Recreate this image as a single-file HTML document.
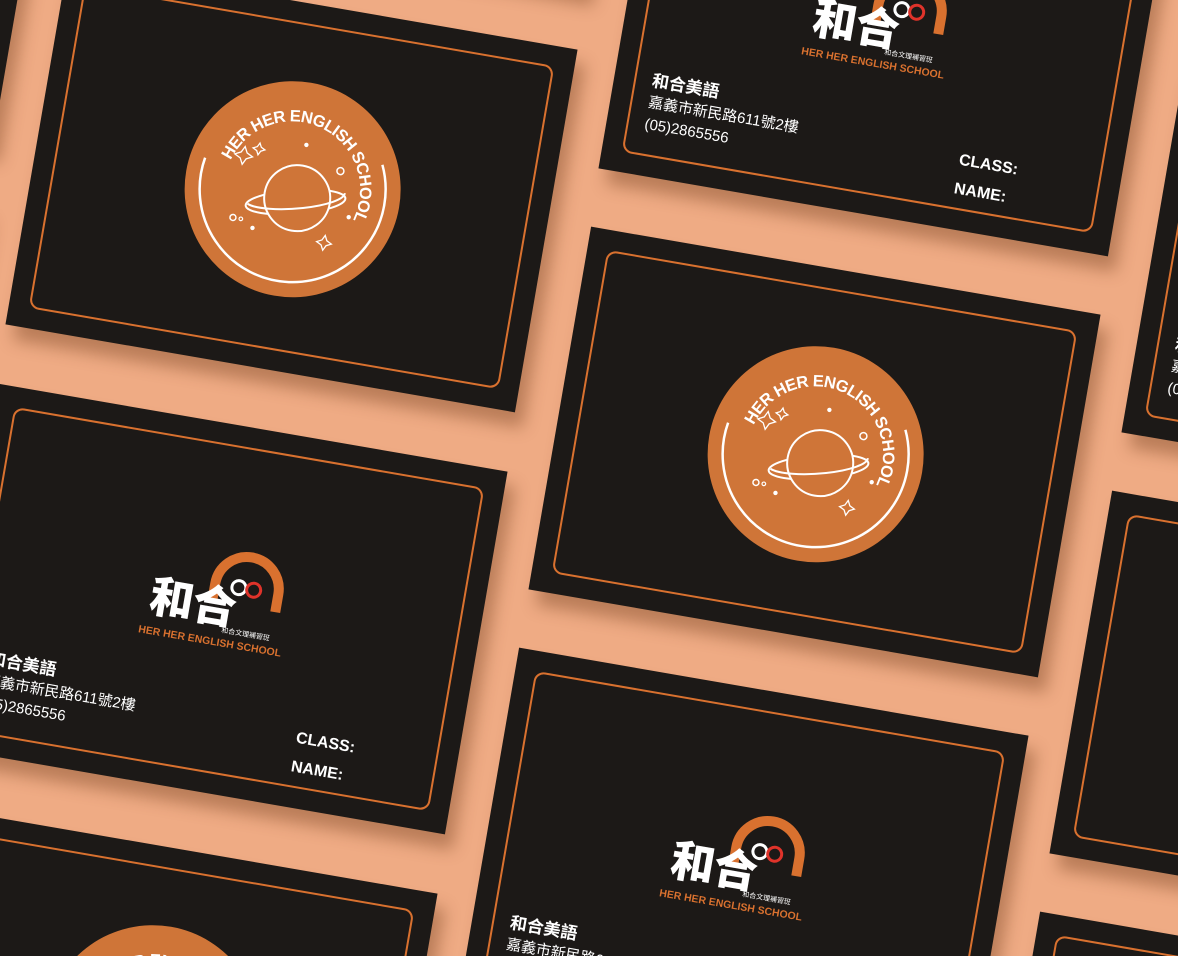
<!DOCTYPE html>
<html><head><meta charset="utf-8"><style>
html,body{margin:0;padding:0;width:1178px;height:956px;overflow:hidden}
body{background:#efab84;position:relative;font-family:"Liberation Sans","Noto Sans CJK TC",sans-serif}
.card{position:absolute;width:517px;height:368px;background:#1c1917;transform:rotate(9.8deg);box-shadow:10px 14px 16px rgba(90,40,10,.35)}
.card .in{position:absolute;left:20px;top:20px;right:20px;bottom:20px;border:2.5px solid #d9712f;border-radius:10px}
.emb{position:absolute;left:150px;top:76px;width:220px;height:220px}
.logo{position:absolute;left:176px;top:128px;width:150px;height:100px;overflow:visible}
.info{position:absolute;left:38px;top:262px;color:#fff;line-height:22px}
.info b{font-size:17px;display:block}
.info span{font-size:15px;display:block}
.cl{position:absolute;left:354px;top:284px;color:#fff;font-family:"Liberation Sans Narrow","Liberation Sans",sans-serif;font-weight:bold;font-size:16px;line-height:29px}
</style></head><body>
<svg width="0" height="0" style="position:absolute"><defs>
<g id="emb">
<circle r="108" fill="#cf7538"/>
<path d="M -91.6,-16.2 A 93 93 0 1 0 84.3,-39.3" fill="none" stroke="#fff" stroke-width="2.5"/>
<path id="tp" d="M -66,-18 A 68 68 0 1 1 34,58.9" fill="none"/>
<text font-family="Liberation Sans,sans-serif" font-weight="bold" font-size="16.5" fill="#fff" letter-spacing="-0.6"><textPath href="#tp">HER HER ENGLISH SCHOOL</textPath></text>
<ellipse cx="5" cy="12" rx="50" ry="12" transform="rotate(-14 5 12)" fill="none" stroke="#fff" stroke-width="2"/>
<circle cx="6" cy="8" r="33" fill="#cf7538" stroke="#fff" stroke-width="2"/>
<path d="M -42,22 A 50 12 -14 0 0 52,-5" fill="none" stroke="#fff" stroke-width="2"/>
<circle cx="6" cy="-46" r="2.2" fill="#fff"/><circle cx="44" cy="-26" r="3.5" fill="none" stroke="#fff" stroke-width="1.5"/>
<circle cx="-54" cy="38" r="3" fill="none" stroke="#fff" stroke-width="1.5"/><circle cx="-46" cy="38" r="1.8" fill="none" stroke="#fff" stroke-width="1.2"/>
<circle cx="-33" cy="45" r="2.2" fill="#fff"/><circle cx="60" cy="18" r="2.2" fill="#fff"/>
<path d="M-54,-34 l3,6 6,3 -6,3 -3,6 -3,-6 -6,-3 6,-3z M-40,-40 l2,4 4,2 -4,2 -2,4 -2,-4 -4,-2 4,-2z M40,40 l2.5,5 5,2.5 -5,2.5 -2.5,5 -2.5,-5 -5,-2.5 5,-2.5z" fill="none" stroke="#fff" stroke-width="1.3"/>
</g>
<g id="logo">
<path d="M 72,50 L 72,32 A 32 32 0 0 1 136,32 L 136,50" fill="none" stroke="#d9712f" stroke-width="10"/>
<circle cx="96" cy="32" r="7" fill="none" stroke="#fff" stroke-width="3"/><circle cx="111" cy="32" r="7" fill="none" stroke="#e0332a" stroke-width="3"/>
<text x="10" y="70" font-family="Noto Sans CJK TC,sans-serif" font-weight="900" font-size="44" fill="#fff" letter-spacing="-1">和合</text>
<text x="86" y="79" font-family="Noto Sans CJK TC,sans-serif" font-size="7" fill="#fff">和合文理補習班</text>
<text x="4" y="93" font-family="Liberation Sans,sans-serif" font-weight="bold" font-size="10.5" fill="#d9712f">HER HER ENGLISH SCHOOL</text>
</g>
</defs></svg>

<div class="card" style="left:32.5px;top:3px"><div class="in"></div><svg class="emb" viewBox="-110 -110 220 220"><use href="#emb"/></svg></div>
<div class="card" style="left:555.5px;top:268px"><div class="in"></div><svg class="emb" viewBox="-110 -110 220 220"><use href="#emb"/></svg></div>
<div class="card" style="left:-107.5px;top:847px"><div class="in"></div><svg class="emb" viewBox="-110 -110 220 220"><use href="#emb"/></svg></div>
<div class="card" style="left:1076.5px;top:532px"><div class="in"></div><svg class="emb" viewBox="-110 -110 220 220"><use href="#emb"/></svg></div>
<div class="card" style="left:-490.5px;top:-262px"><div class="in"></div></div>
<div class="card" style="left:-630.5px;top:582px"><div class="in"></div></div>

<div class="card" style="left:-560.5px;top:160px"><div class="in"></div></div>
<div class="card" style="left:102.5px;top:-419px"><div class="in"></div></div>
<div class="card" style="left:1218.5px;top:-310px"><div class="in"></div></div>
<div class="card" style="left:-37.5px;top:425px"><div class="in"></div><svg class="logo" viewBox="0 0 150 100"><use href="#logo"/></svg>
<div class="info"><b>和合美語</b><span>嘉義市新民路611號2樓</span><span>(05)2865556</span></div><div class="cl">CLASS:<br>NAME:</div></div>
<div class="card" style="left:625.5px;top:-153px"><div class="in"></div><svg class="logo" viewBox="0 0 150 100"><use href="#logo"/></svg>
<div class="info"><b>和合美語</b><span>嘉義市新民路611號2樓</span><span>(05)2865556</span></div><div class="cl">CLASS:<br>NAME:</div></div>
<div class="card" style="left:483.5px;top:689px"><div class="in"></div><svg class="logo" viewBox="0 0 150 100"><use href="#logo"/></svg>
<div class="info"><b>和合美語</b><span>嘉義市新民路611號2樓</span><span>(05)2865556</span></div><div class="cl">CLASS:<br>NAME:</div></div>
<div class="card" style="left:1148.5px;top:111px"><div class="in"></div><svg class="logo" viewBox="0 0 150 100"><use href="#logo"/></svg>
<div class="info"><b>和合美語</b><span>嘉義市新民路611號2樓</span><span>(05)2865556</span></div><div class="cl">CLASS:<br>NAME:</div></div>
<div class="card" style="left:1004.5px;top:953px"><div class="in"></div></div>
</body></html>
